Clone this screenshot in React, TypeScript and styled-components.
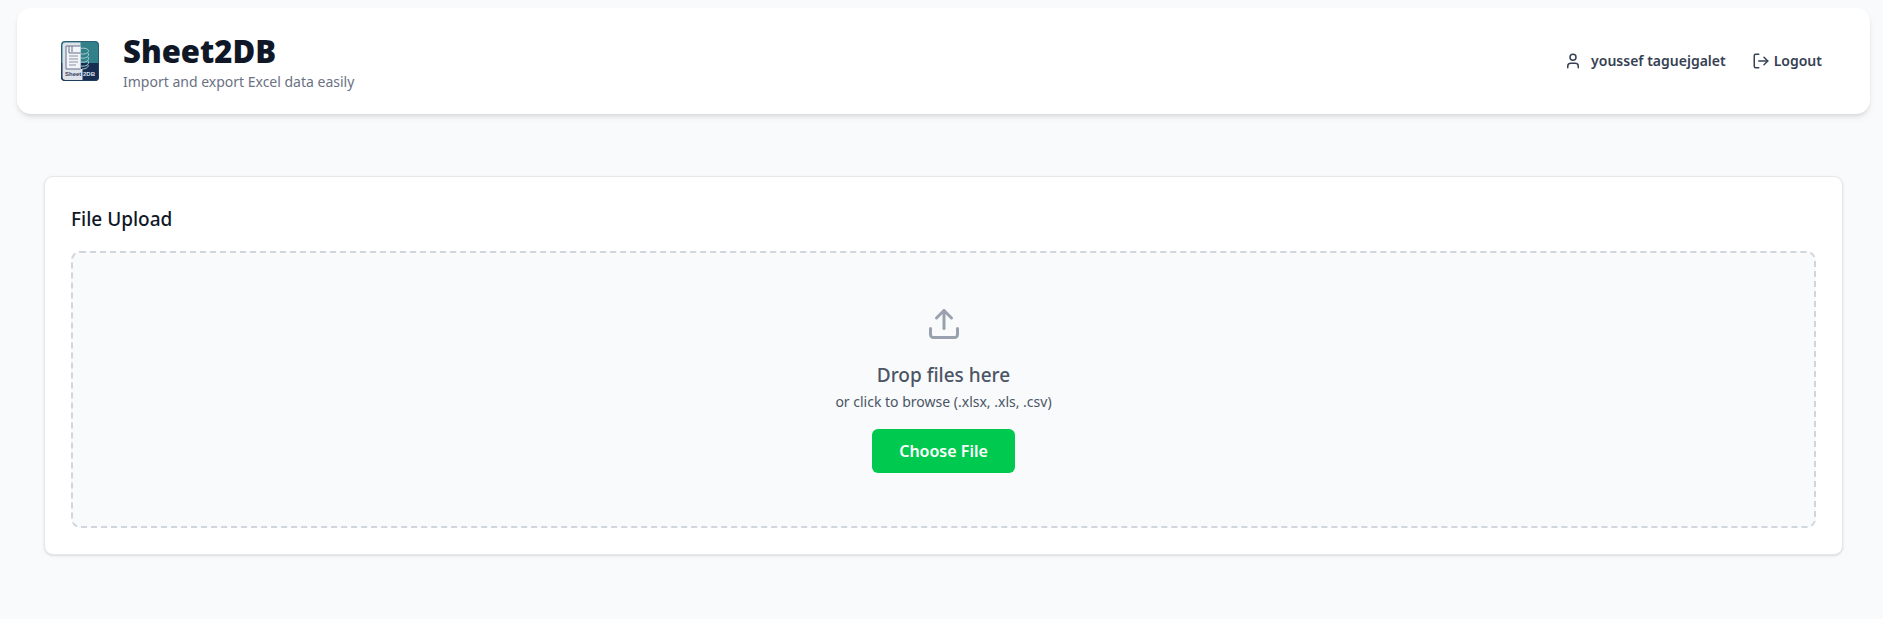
import { LogOut, Upload, User } from "lucide-react";
import styled, { createGlobalStyle } from "styled-components";

const GlobalStyle = createGlobalStyle`
  *, *::before, *::after { box-sizing: border-box; }
  body {
    margin: 0;
    background: #f9fafb;
    color: #101828;
    font-family: "Segoe UI", "Noto Sans", "Open Sans", sans-serif;
  }
  h1, h2, p { margin: 0; }
`;

const Page = styled.div`
  padding: 8px 13px 24px 17px;
`;

const Header = styled.header`
  display: flex;
  align-items: center;
  justify-content: space-between;
  min-height: 106px;
  padding: 20px 48px 20px 43px;
  border-radius: 14px;
  background: #ffffff;
  box-shadow: 0 4px 6px -1px rgba(0, 0, 0, 0.1), 0 2px 4px -2px rgba(0, 0, 0, 0.1);
`;

const Brand = styled.div`
  display: flex;
  align-items: center;
  gap: 24px;
`;

const LogoSvg = styled.svg`
  display: block;
  width: 39px;
  height: 42px;
`;

const BrandText = styled.div`
  padding-top: 5px;
`;

const Title = styled.h1`
  font-size: 31px;
  line-height: 36px;
  font-weight: 900;
`;

const Tagline = styled.p`
  color: #6a7282;
  font-size: 14px;
  line-height: 25px;
`;

const Account = styled.nav`
  display: flex;
  align-items: center;
  gap: 26px;
  color: #364153;
  font-size: 14px;
  line-height: 22px;
  font-weight: 600;
`;

const UserName = styled.span`
  display: flex;
  align-items: center;
  gap: 9px;
`;

const LogoutButton = styled.button`
  display: flex;
  align-items: center;
  gap: 4px;
  padding: 0;
  border: 0;
  background: none;
  color: inherit;
  font: inherit;
  cursor: pointer;
`;

const Panel = styled.section`
  margin: 62px 27px 0;
  padding: 26px;
  border: 1px solid #e5e7eb;
  border-radius: 9px;
  background: #ffffff;
  box-shadow: 0 1px 3px rgba(0, 0, 0, 0.1), 0 1px 2px -1px rgba(0, 0, 0, 0.1);
`;

const PanelTitle = styled.h2`
  margin-bottom: 16px;
  font-size: 19px;
  line-height: 32px;
  font-weight: 500;
`;

const DropZone = styled.div`
  display: flex;
  flex-direction: column;
  align-items: center;
  padding: 53px 24px;
  border: 2px dashed #d1d5dc;
  border-radius: 9px;
  background: #f9fafb;
  color: #4a5565;
  text-align: center;
`;

const UploadIcon = styled(Upload)`
  margin-bottom: 17px;
  color: #99a1af;
`;

const DropTitle = styled.p`
  font-size: 19px;
  line-height: 32px;
  font-weight: 500;
`;

const DropHint = styled.p`
  margin-bottom: 16px;
  font-size: 14px;
  line-height: 22px;
`;

const ChooseButton = styled.button`
  min-height: 44px;
  padding: 8px 27px;
  border: 0;
  border-radius: 6px;
  background: #00c950;
  color: #ffffff;
  font: inherit;
  font-size: 16px;
  line-height: 28px;
  font-weight: 600;
  cursor: pointer;
`;

function Logo() {
  return (
    <LogoSvg viewBox="-1 -1 39 42" role="img" aria-label="Sheet2DB logo">
      <defs>
        <clipPath id="logo-shape">
          <rect width="38" height="40" rx="4" />
        </clipPath>
      </defs>
      <g clipPath="url(#logo-shape)">
        <rect width="38" height="40" fill="#32808a" />
        <rect y="22" width="38" height="18" fill="#182d52" />
        <path d="M1.5 4Q1.5 1.5 4 1.5H19.5V28H21.5V39H4Q1.5 39 1.5 36Z" fill="#dfe3ea" />
        <path d="M5 5H19.5V28H5Z" fill="#f3f4f8" />
        <path d="M19.5 5H5V28H19.5M8 5V12H19.5M11 5V11" fill="none" stroke="#66718c" />
        <path d="M8 15H17M8 18H17M8 21H17M8 24H15" stroke="#8993a8" />
        <path
          d="M19.5 7.5C24 6.5 27.5 8 27.5 10C27.5 12 24 13.5 20 13M27 12C29 15 25 18 20 17M27 16C29 19 25 22 20 21M27 20C29 23 25 26 20 25M27 24C28 26 25 28 21 28"
          fill="none"
          stroke="#a9cdd1"
        />
      </g>
      <rect x="0.5" y="0.5" width="37" height="39" rx="4" fill="none" stroke="#244b62" strokeOpacity="0.6" />
      <text x="4" y="35" fill="#35415f" fontFamily="Liberation Sans, sans-serif" fontSize="6" fontWeight="700">
        Sheet
      </text>
      <text x="22" y="35" fill="#dce4ee" fontFamily="Liberation Sans, sans-serif" fontSize="6" fontWeight="700">
        2DB
      </text>
    </LogoSvg>
  );
}

export default function App() {
  return (
    <>
      <GlobalStyle />
      <Page>
        <Header>
          <Brand>
            <Logo />
            <BrandText>
              <Title>Sheet2DB</Title>
              <Tagline>Import and export Excel data easily</Tagline>
            </BrandText>
          </Brand>
          <Account aria-label="Account">
            <UserName>
              <User size={18} aria-hidden="true" />
              youssef taguejgalet
            </UserName>
            <LogoutButton type="button">
              <LogOut size={18} aria-hidden="true" />
              Logout
            </LogoutButton>
          </Account>
        </Header>
        <main>
          <Panel aria-labelledby="upload-title">
            <PanelTitle id="upload-title">File Upload</PanelTitle>
            <DropZone>
              <UploadIcon size={36} aria-hidden="true" />
              <DropTitle>Drop files here</DropTitle>
              <DropHint>or click to browse (.xlsx, .xls, .csv)</DropHint>
              <ChooseButton type="button">Choose File</ChooseButton>
            </DropZone>
          </Panel>
        </main>
      </Page>
    </>
  );
}
